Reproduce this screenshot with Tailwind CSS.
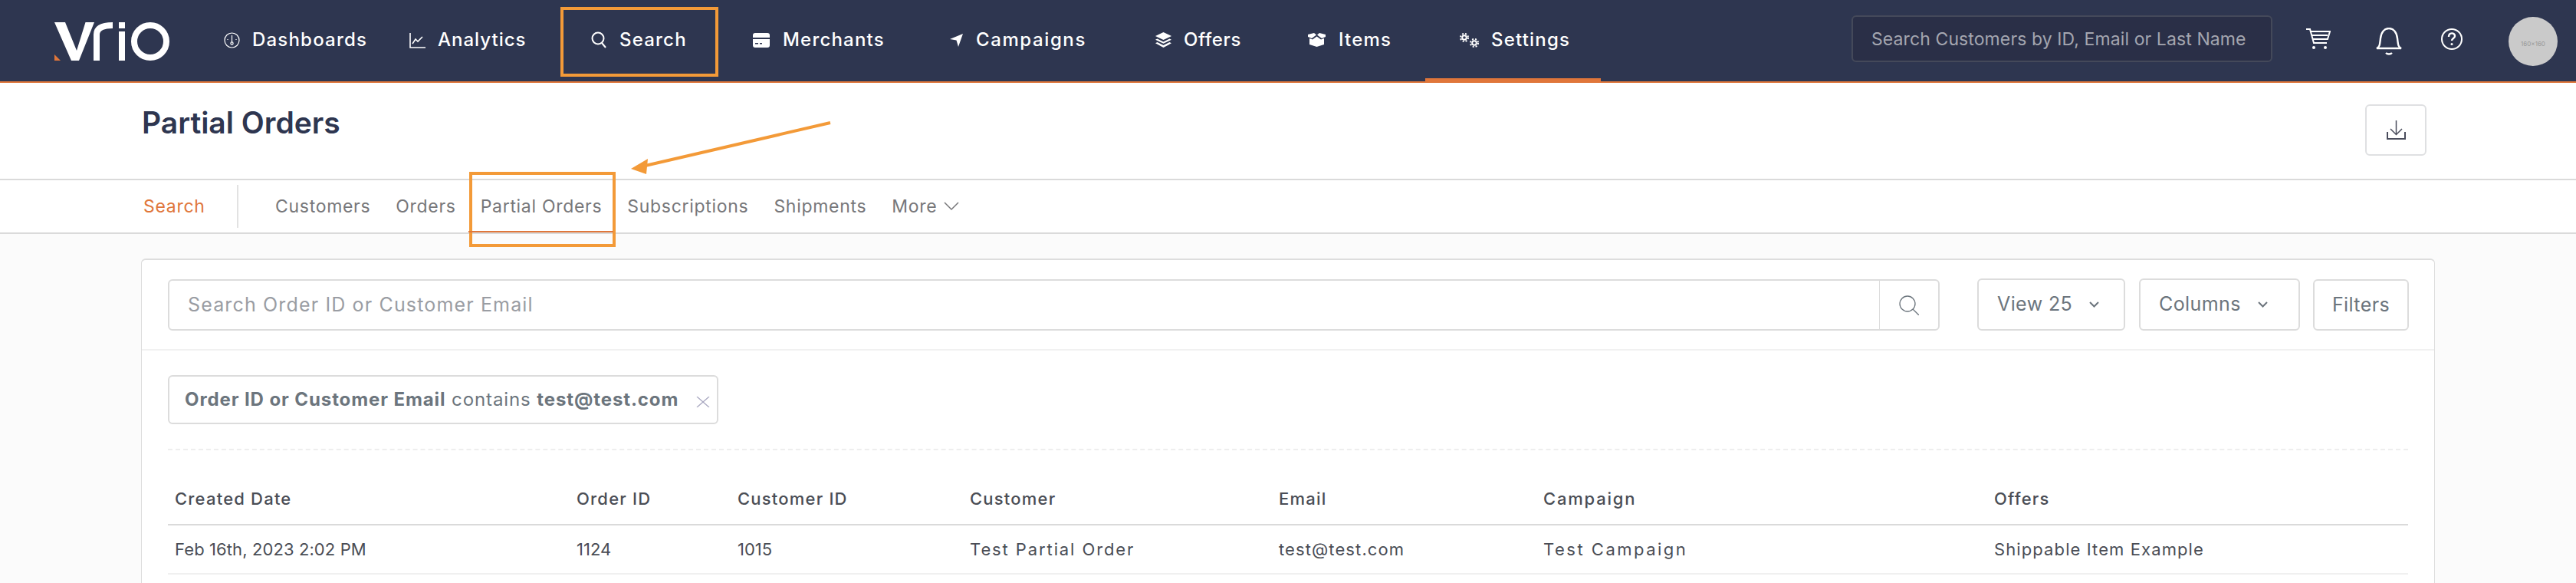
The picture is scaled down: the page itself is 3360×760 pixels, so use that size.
<!DOCTYPE html>
<html lang="en">
<head>
  <meta charset="UTF-8" />
  <title>Partial Orders</title>
  <script src="https://cdn.jsdelivr.net/npm/@tailwindcss/browser@4"></script>
</head>
<body class="relative h-[760px] overflow-hidden bg-[#fbfbfb] font-['Inter',sans-serif] text-[22px] text-[#4a4d55]">
  <!-- Top nav -->
  <header class="flex h-[108px] items-stretch border-b-2 border-[#e0763a] bg-[#2e3650] pl-[71px] text-white">
    <svg class="mt-[29px] h-[50px] w-[150px] shrink-0" viewBox="0 0 150 50">
      <path fill="#fff" d="M0 0H14L29 37 40.500 0H52L32 50H22Z" />
      <path fill="#e0763a" d="M0 42V50H8Z" />
      <path fill="none" stroke="#fff" stroke-width="8" d="M55 50V16Q55 4 76 4" />
      <path fill="#fff" d="M84 0H92V8H84ZM84 12H92V50H84Z" />
      <circle cx="125" cy="25" r="21" fill="none" stroke="#fff" stroke-width="8" />
    </svg>

    <nav class="ml-[43px] flex text-[24px] font-medium tracking-[1.2px]">
      <a class="flex w-[242px] items-center gap-[16px] pb-[2px] pl-[28px]">
        <svg class="h-[21px] w-[21px] shrink-0" viewBox="0 0 21 21" fill="none" stroke="#fff" stroke-width="1.200"><circle cx="10.500" cy="10.500" r="9.500" /><path d="M10.500 4v9" /><circle cx="10.500" cy="14.500" r="1.600" /><path d="M5 9v1M16 9v1" /></svg>
        <span class="whitespace-nowrap">Dashboards</span>
      </a>
      <a class="flex w-[205px] items-center gap-[16px] pb-[2px] pl-[28px]">
        <svg class="h-[21px] w-[21px] shrink-0" viewBox="0 0 21 21" fill="none" stroke="#fff" stroke-width="1.600"><path d="M1 1v19h20" /><path d="M4 15l4-6 3 3 6-6" /></svg>
        <span class="whitespace-nowrap tracking-[1px]">Analytics</span>
      </a>
      <a class="ml-[15px] flex w-[211px] items-center gap-[17px] pb-[2px] pl-[45px]">
        <svg class="h-[22px] w-[20px] shrink-0" viewBox="0 0 20 22" fill="none" stroke="#fff" stroke-width="2"><ellipse cx="9" cy="9" rx="7.500" ry="7.500" /><path d="M14 15l5 6" /></svg>
        <span class="whitespace-nowrap">Search</span>
      </a>
      <a class="flex w-[257px] items-center gap-[17px] pb-[2px] pl-[45px]">
        <svg class="h-[19px] w-[22px] shrink-0" viewBox="0 0 22 19" fill="#fff"><path d="M3 0h16a3 3 0 0 1 3 3v3H0V3a3 3 0 0 1 3-3Z" /><path fill-rule="evenodd" d="M0 8h22v8a3 3 0 0 1-3 3H3a3 3 0 0 1-3-3Zm3 5v1.500h4V13Zm6 0v1.500h3V13Z" /></svg>
        <span class="whitespace-nowrap">Merchants</span>
      </a>
      <a class="flex w-[268px] items-center gap-[17px] pb-[2px] pl-[45px]">
        <svg class="h-[17px] w-[17px] shrink-0" viewBox="0 0 17 17" fill="#fff"><path d="M17 0 11 17 8.500 8.500 0 7Z" /></svg>
        <span class="whitespace-nowrap tracking-[1.600px]">Campaigns</span>
      </a>
      <a class="flex w-[199px] items-center gap-[16px] pb-[2px] pl-[45px]">
        <svg class="h-[20px] w-[21px] shrink-0" viewBox="0 0 21 20" fill="#fff"><path d="M10.500 0 21 5 10.500 10 0 5Z" /><path d="M2.500 8.500 10.500 12.500l8-4 2.500 1.300-10.500 5L0 9.800Z" /><path d="M2.500 13 10.500 17l8-4 2.500 1.300L10.500 20 0 14.300Z" /></svg>
        <span class="whitespace-nowrap tracking-[0.6px]">Offers</span>
      </a>
      <a class="flex w-[198px] items-center gap-[17px] pb-[2px] pl-[45px]">
        <svg class="h-[18px] w-[23px] shrink-0" viewBox="0 0 23 18" fill="#fff"><path d="M0 2 8 0l3 2.500L5 7 0 5Z" /><path d="M23 2 15 0l-3 2.500L18 7l5-2Z" /><path d="M2 7l4 1.500 5.500-4 5.500 4 4-1.500v8l-9.500 3L2 15Z" /></svg>
        <span class="whitespace-nowrap">Items</span>
      </a>
      <a class="relative flex w-[229px] items-center gap-[16px] pb-[2px] pl-[45px]">
        <svg class="h-[19px] w-[25px] shrink-0" viewBox="0 0 25 19" fill="none" stroke="#fff"><circle cx="6" cy="6" r="2.800" stroke-width="2" /><circle cx="6" cy="6" r="5" stroke-width="2" stroke-dasharray="2 2" /><circle cx="19" cy="13" r="2.800" stroke-width="2" /><circle cx="19" cy="13" r="5" stroke-width="2" stroke-dasharray="2 2" /></svg>
        <span class="whitespace-nowrap">Settings</span>
        <span class="absolute inset-x-0 bottom-[-2px] h-[6px] bg-[#e0763a]"></span>
      </a>
    </nav>

    <div class="ml-[327px] flex items-center">
      <input class="mb-[5px] h-[61px] w-[549px] rounded-[6px] border-2 border-[#44495a] bg-[#2a2f47] pl-[24px] text-[23px] tracking-[0.1px] placeholder:text-[#a4a6b0]" placeholder="Search Customers by ID, Email or Last Name" />
      <svg class="mb-[5px] ml-[44px] h-[28px] w-[32px]" viewBox="0 0 32 28" fill="none" stroke="#fff" stroke-width="2"><path d="M0 1h5l5 18h17" /><path d="M6 4h25l-3 10H9" /><path d="M8 9h20" /><circle cx="10" cy="25" r="2" fill="#fff" stroke="none" /><circle cx="25" cy="25" r="2" fill="#fff" stroke="none" /></svg>
      <svg class="ml-[59px] mt-[2px] h-[36px] w-[34px]" viewBox="0 0 34 36" fill="none" stroke="#fff" stroke-width="2.400"><path d="M1 27c4-2 4-4 5-13C7 6 11 1 17 1s10 5 11 13c1 9 1 11 5 13Z" /><path d="M13 33c2 2 6 2 8 0" /></svg>
      <svg class="mb-[4px] ml-[51px] h-[28px] w-[28px]" viewBox="0 0 28 28" fill="none" stroke="#fff" stroke-width="2"><circle cx="14" cy="14" r="13" /><path stroke-width="2.400" d="M10 11c0-6 8-6 8-1 0 3-4 3-4 6" /><circle cx="14" cy="20.500" r="1.500" fill="#fff" stroke="none" /></svg>
      <div class="ml-[60px] mt-[2px] flex h-[64px] w-[64px] items-center justify-center rounded-full bg-[#cacaca] pt-[6px] text-[8px] text-[#999999]">160×160</div>
    </div>
  </header>

  <!-- Page title -->
  <div class="flex h-[127px] items-start justify-between border-b-2 border-[#dadada] bg-white pl-[185px] pr-[195px]">
    <h1 class="mt-[28px] text-[39px] leading-[48px] font-semibold text-[#2e3650]">Partial Orders</h1>
    <button class="mt-[28px] flex h-[67px] w-[80px] items-center justify-center rounded-[6px] border-2 border-[#dfe0e2]">
      <svg class="h-[25px] w-[25px]" viewBox="0 0 25 25" fill="none" stroke="#4a4d5c" stroke-width="1.500"><path d="M12.500 0v18M5 11l7.500 7.500L20 11" /><path stroke-width="2" d="M1 15v9h23v-9" /></svg>
    </button>
  </div>

  <!-- Sub nav -->
  <div class="flex h-[70px] items-center border-b-2 border-[#dadada] bg-white pl-[187px] text-[23px] tracking-[0.7px] text-[#77777a]">
    <a class="w-[122px] text-[#e0763a]">Search</a>
    <span class="h-[56px] w-[2px] bg-[#e2e2e2]"></span>
    <a class="ml-[48px]">Customers</a>
    <a class="ml-[33px]">Orders</a>
    <a class="ml-[32px]">Partial Orders</a>
    <a class="ml-[33px]">Subscriptions</a>
    <a class="ml-[33px]">Shipments</a>
    <a class="ml-[33px]">More</a>
    <svg class="ml-[9px] h-[12px] w-[20px]" viewBox="0 0 20 12" fill="none" stroke="#77777a" stroke-width="1.500"><path d="M1 1l9 9 9-9" /></svg>
  </div>

  <!-- Card -->
  <section class="mt-[32px] ml-[184px] h-[500px] w-[2992px] rounded-t-[6px] border border-t-2 border-[#dddddd] bg-white">
    <div class="flex h-[118px] items-start border-b-2 border-[#f1f1f1] pt-[25px] pl-[34px] text-[25px] tracking-[0.4px] text-[#6c757d]">
      <div class="flex h-[67px] w-[2311px] rounded-[6px] border-2 border-[#dcdcdc]">
        <input class="min-w-0 flex-1 pl-[24px] tracking-[1.150px] placeholder:text-[#9a9da3]" placeholder="Search Order ID or Customer Email" />
        <div class="flex w-[77px] items-center justify-center border-l border-[#dcdcdc]">
          <svg class="h-[26px] w-[26px]" viewBox="0 0 26 26" fill="none" stroke="#6c757d" stroke-width="1.300"><circle cx="11" cy="11" r="10" /><path d="M18 18l8 8" /></svg>
        </div>
      </div>
      <button class="-mt-[1px] ml-[49px] flex h-[68px] w-[193px] items-center rounded-[6px] border-2 border-[#dcdcdc] pl-[24px]">View 25
        <svg class="ml-[22px] h-[8px] w-[13px]" viewBox="0 0 13 8" fill="none" stroke="#6c757d" stroke-width="2"><path d="M1 1l5.500 5.500L12 1" /></svg>
      </button>
      <button class="-mt-[1px] ml-[18px] flex h-[68px] w-[210px] items-center rounded-[6px] border-2 border-[#dcdcdc] pl-[24px]">Columns
        <svg class="ml-[22px] h-[8px] w-[13px]" viewBox="0 0 13 8" fill="none" stroke="#6c757d" stroke-width="2"><path d="M1 1l5.500 5.500L12 1" /></svg>
      </button>
      <button class="ml-[17px] h-[67px] w-[125px] rounded-[6px] border-2 border-[#dcdcdc]">Filters</button>
    </div>

    <div class="mx-[34px]">
      <div class="mt-[32px] flex h-[64px] w-[718px] items-center justify-between rounded-[6px] border-2 border-[#dcdcdc] pr-[9px] pl-[20px] text-[24px] tracking-[0.9px] text-[#6c757d]">
        <span class="whitespace-nowrap"><b class="font-bold">Order ID or Customer Email</b> contains <b class="font-bold">test@test.com</b></span>
        <svg class="mt-[6px] h-[14px] w-[18px]" viewBox="0 0 18 14" fill="none" stroke="#a9a8c0" stroke-width="1.300"><path d="M1 0l16 14M17 0 1 14" /></svg>
      </div>
      <div class="mt-[32px] border-t-2 border-dashed border-[#eeeeee]"></div>

      <div class="mt-[30px] grid h-[68px] grid-cols-[524px_210px_303px_403px_345px_588px_1fr] items-center border-b-2 border-[#dadada] pl-[9px] font-medium tracking-[1.2px]">
        <span>Created Date</span><span>Order ID</span><span>Customer ID</span><span>Customer</span><span>Email</span><span class="tracking-[1.800px]">Campaign</span><span>Offers</span>
      </div>
      <div class="grid h-[64px] grid-cols-[524px_210px_303px_403px_345px_588px_1fr] items-center border-b-2 border-[#f0f0f0] pl-[9px] tracking-[1.1px]">
        <span class="tracking-[0.1px]">Feb 16th, 2023 2:02 PM</span><span class="tracking-normal">1124</span><span class="tracking-normal">1015</span><span class="tracking-[1.900px]">Test Partial Order</span><span>test@test.com</span><span class="tracking-[2.500px]">Test Campaign</span><span>Shippable Item Example</span>
      </div>
    </div>
  </section>

  <!-- Annotations -->
  <div class="absolute top-[9px] left-[731px] h-[91px] w-[206px] border-4 border-[#f39a38]"></div>
  <div class="absolute top-[224px] left-[612px] h-[98px] w-[191px] border-4 border-[#f39a38]"></div>
  <div class="absolute top-[301px] left-[611px] h-[2px] w-[189px] bg-[#e0763a]"></div>
  <svg class="absolute top-[155px] left-[815px] h-[75px] w-[275px]" viewBox="0 0 275 75" fill="none"><path stroke="#f39a38" stroke-width="4" d="M268 5 18 63" /><path fill="#f39a38" d="M8 65 30 52 28 72Z" /></svg>
</body>
</html>
